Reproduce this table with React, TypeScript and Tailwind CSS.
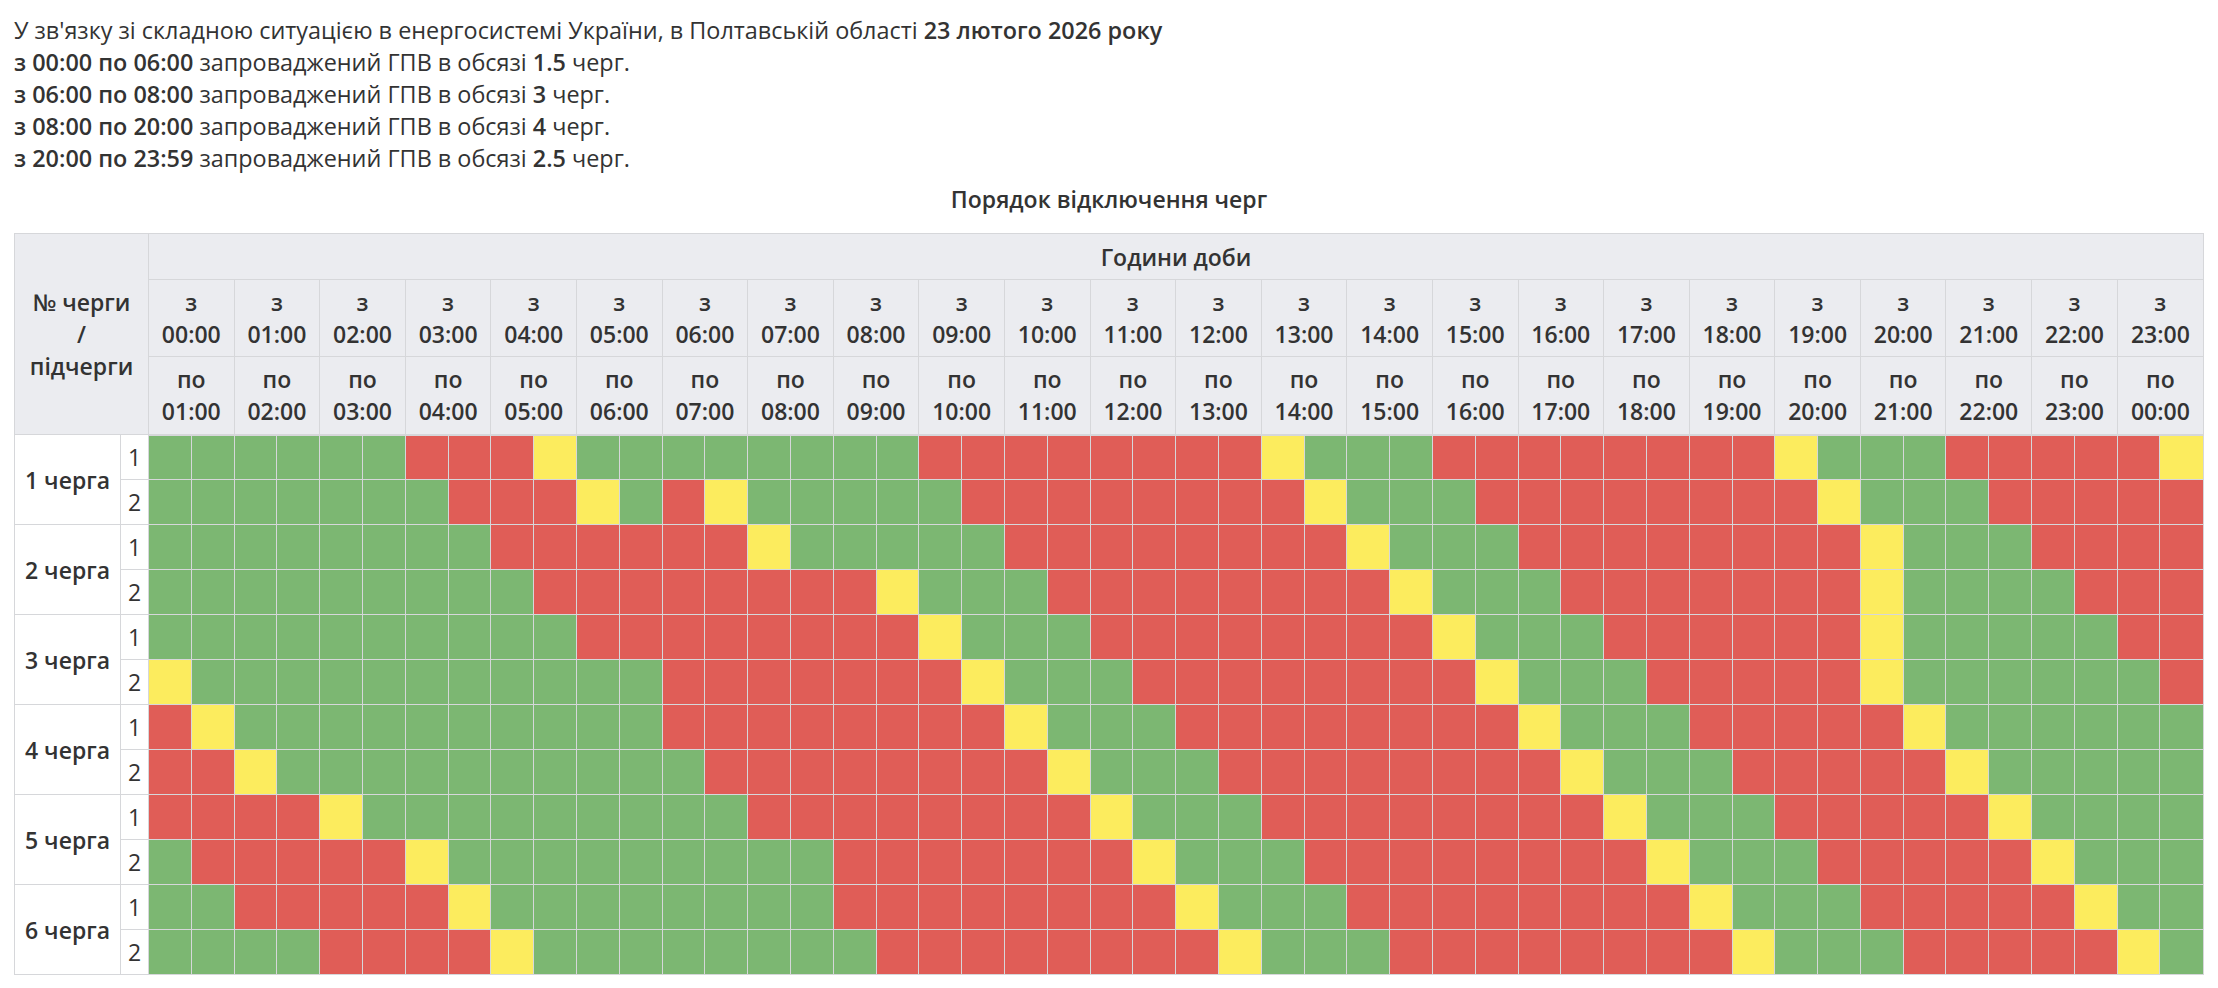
import React from "react";

// row specs: run-length of g(reen) / r(ed) / y(ellow) half-hour cells, 48 per row
const rows: string[] = [
  "g6 r3 y1 g8 r8 y1 g3 r8 y1 g3 r5 y1",
  "g7 r3 y1 g1 r1 y1 g5 r8 y1 g3 r8 y1 g3 r5",
  "g8 r6 y1 g5 r8 y1 g3 r8 y1 g3 r4",
  "g9 r8 y1 g3 r8 y1 g3 r7 y1 g4 r3",
  "g10 r8 y1 g3 r8 y1 g3 r6 y1 g5 r2",
  "y1 g11 r7 y1 g3 r8 y1 g3 r5 y1 g6 r1",
  "r1 y1 g10 r8 y1 g3 r8 y1 g3 r5 y1 g6",
  "r2 y1 g10 r8 y1 g3 r8 y1 g3 r5 y1 g5",
  "r4 y1 g9 r8 y1 g3 r8 y1 g3 r5 y1 g4",
  "g1 r5 y1 g9 r7 y1 g3 r8 y1 g3 r5 y1 g3",
  "g2 r5 y1 g8 r8 y1 g3 r8 y1 g3 r5 y1 g2",
  "g4 r4 y1 g8 r8 y1 g3 r8 y1 g3 r5 y1 g1",
];

const colors: Record<string, string> = {
  g: "bg-[#7cb772]",
  r: "bg-[#e05d57]",
  y: "bg-[#fcec5e]",
};

function expand(spec: string) {
  const out: string[] = [];
  spec.split(" ").forEach((part) => {
    const n = parseInt(part.slice(1), 10);
    for (let i = 0; i < n; i++) out.push(part[0]);
  });
  return out;
}

const hh = (h: number) => `${String(h % 24).padStart(2, "0")}:00`;
const hours = Array.from({ length: 24 }, (_, i) => i);

const notes = [
  ["з 00:00 по 06:00", "1.5"],
  ["з 06:00 по 08:00", "3"],
  ["з 08:00 по 20:00", "4"],
  ["з 20:00 по 23:59", "2.5"],
];

export default function App() {
  return (
    <div className="bg-white px-[14px] pt-[14px] pb-[12px] font-['Open_Sans',sans-serif] text-[23px] leading-[32px] text-[#333]">
      <div className="text-[23.4px]">
        <div>
          У зв'язку зі складною ситуацією в енергосистемі України, в Полтавській області{" "}
          <span className="font-semibold">23 лютого 2026 року</span>
        </div>
        {notes.map(([range, n]) => (
          <div key={range}>
            <span className="font-semibold">{range}</span> запроваджений ГПВ в обсязі{" "}
            <span className="font-semibold">{n}</span> черг.
          </div>
        ))}
      </div>

      <div className="mt-[9px] mb-[18px] text-center font-semibold">Порядок відключення черг</div>

      <table className="w-full table-fixed border-collapse">
        <colgroup>
          <col className="w-[106px]" />
          <col className="w-[28px]" />
          {Array.from({ length: 48 }, (_, i) => (
            <col key={i} />
          ))}
        </colgroup>
        <thead className="bg-[#ebecf0]">
          <tr className="h-[46px]">
            <th rowSpan={3} colSpan={2} className="border border-[#d6d7da] p-0 font-semibold">
              № черги
              <br />/
              <br />
              підчерги
            </th>
            <th colSpan={48} className="border border-[#d6d7da] p-0 font-semibold">
              Години доби
            </th>
          </tr>
          <tr className="h-[77px]">
            {hours.map((h) => (
              <th key={h} colSpan={2} className="border border-[#d6d7da] p-0 font-semibold">
                з
                <br />
                {hh(h)}
              </th>
            ))}
          </tr>
          <tr className="h-[78px]">
            {hours.map((h) => (
              <th key={h} colSpan={2} className="border border-[#d6d7da] border-b-2 p-0 font-semibold">
                по
                <br />
                {hh(h + 1)}
              </th>
            ))}
          </tr>
        </thead>
        <tbody>
          {rows.map((spec, r) => (
            <tr key={r} className="h-[45px]">
              {r % 2 === 0 && (
                <td rowSpan={2} className="border border-[#d6d7da] p-0 text-center font-semibold">
                  {r / 2 + 1} черга
                </td>
              )}
              <td className="border border-[#d6d7da] p-0 text-center">{(r % 2) + 1}</td>
              {expand(spec).map((c, i) => (
                <td key={i} className={`border border-[#d6d7da] p-0 ${colors[c]}`} />
              ))}
            </tr>
          ))}
        </tbody>
      </table>
    </div>
  );
}
